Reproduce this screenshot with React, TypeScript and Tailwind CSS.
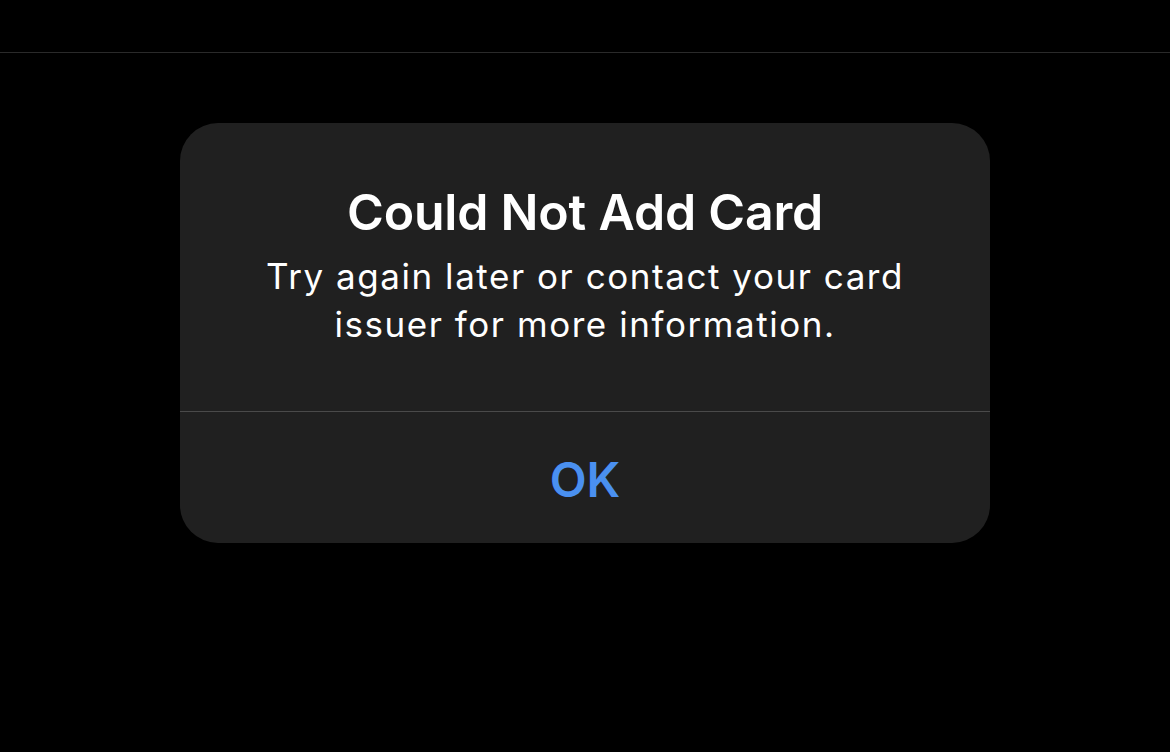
export default function App() {
  return (
    <div
      className="flex h-[752px] w-full flex-col bg-black"
      style={{ fontFamily: 'Inter, "Noto Sans", sans-serif' }}
    >
      {/* status area strip */}
      <div className="h-[53px] shrink-0 border-b border-[#2a2a2a]" />

      <div className="flex justify-center pt-[70px]">
        <div className="flex w-[810px] flex-col overflow-hidden rounded-[38px] bg-[#202020]">
          <div className="px-10 pt-[59px] pb-[63px] text-center text-white">
            <h1 className="text-[50px] leading-[60px] font-semibold tracking-[-0.2px]">
              Could Not Add Card
            </h1>
            <p className="mt-[10px] text-[35px] leading-[48px] font-normal tracking-[1.55px]">
              Try again later or contact your card
              <br />
              issuer for more information.
            </p>
          </div>
          <div className="h-px bg-[#4a4a4a]" />
          <button className="flex h-[131px] items-center justify-center pt-[4px] text-[48px] font-semibold text-[#4a90f0]">
            OK
          </button>
        </div>
      </div>
    </div>
  );
}
